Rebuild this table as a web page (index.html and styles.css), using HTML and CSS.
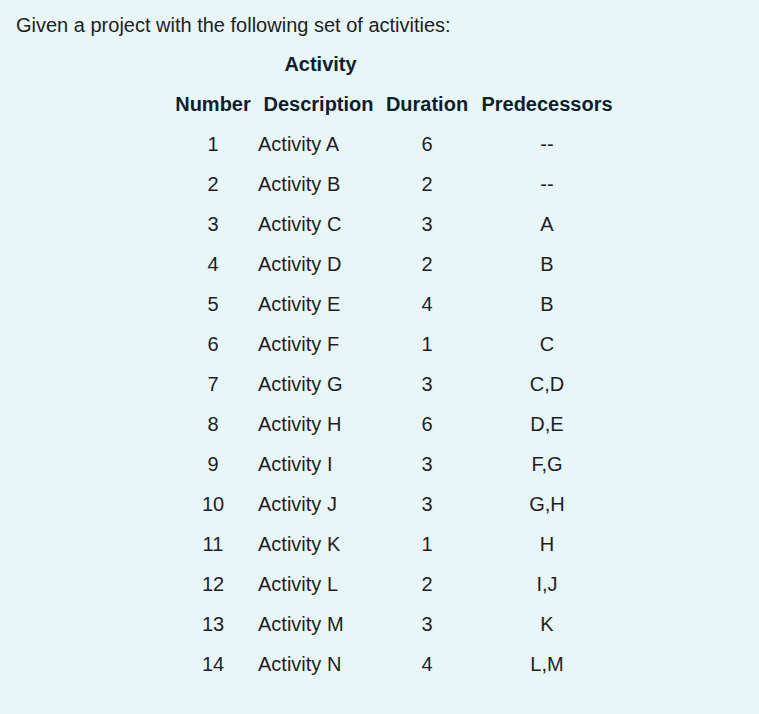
FILE: index.html
```html
<!DOCTYPE html>
<html>
<head>
<meta charset="utf-8">
<link rel="stylesheet" href="styles.css">
</head>
<body>
<p class="intro">Given a project with the following set of activities:</p>
<table class="acts">
  <colgroup>
    <col class="c-num"><col class="c-desc"><col class="c-dur"><col class="c-pred">
  </colgroup>
  <thead>
    <tr><th></th><th class="group">Activity</th><th></th><th></th></tr>
    <tr><th>Number</th><th>Description</th><th>Duration</th><th>Predecessors</th></tr>
  </thead>
  <tbody>
    <tr><td>1</td><td class="desc">Activity A</td><td>6</td><td>--</td></tr>
    <tr><td>2</td><td class="desc">Activity B</td><td>2</td><td>--</td></tr>
    <tr><td>3</td><td class="desc">Activity C</td><td>3</td><td>A</td></tr>
    <tr><td>4</td><td class="desc">Activity D</td><td>2</td><td>B</td></tr>
    <tr><td>5</td><td class="desc">Activity E</td><td>4</td><td>B</td></tr>
    <tr><td>6</td><td class="desc">Activity F</td><td>1</td><td>C</td></tr>
    <tr><td>7</td><td class="desc">Activity G</td><td>3</td><td>C,D</td></tr>
    <tr><td>8</td><td class="desc">Activity H</td><td>6</td><td>D,E</td></tr>
    <tr><td>9</td><td class="desc">Activity I</td><td>3</td><td>F,G</td></tr>
    <tr><td>10</td><td class="desc">Activity J</td><td>3</td><td>G,H</td></tr>
    <tr><td>11</td><td class="desc">Activity K</td><td>1</td><td>H</td></tr>
    <tr><td>12</td><td class="desc">Activity L</td><td>2</td><td>I,J</td></tr>
    <tr><td>13</td><td class="desc">Activity M</td><td>3</td><td>K</td></tr>
    <tr><td>14</td><td class="desc">Activity N</td><td>4</td><td>L,M</td></tr>
  </tbody>
</table>
</body>
</html>
```
FILE: styles.css
```css
html, body {
  margin: 0;
  padding: 0;
  background: #e8f6f8;
}
body {
  font-family: "Liberation Sans", Arial, sans-serif;
  font-size: 20px;
  color: #1e1e24;
  padding: 0 16px;
  min-height: 714px;
  box-sizing: border-box;
}
.intro {
  margin: 10px 0 0 0;
  line-height: 30px;
}
.acts {
  margin: 4px 0 0 154px;
  border-collapse: collapse;
  table-layout: fixed;
  width: 451px;
}
.c-num { width: 86px; }
.c-desc { width: 125px; }
.c-dur { width: 92px; }
.c-pred { width: 148px; }
.acts th, .acts td {
  padding: 0;
  height: 40px;
  text-align: center;
  vertical-align: middle;
  white-space: nowrap;
}
.acts th {
  font-weight: bold;
  color: #0f1e2a;
}
.acts th.group {
  padding-left: 4px;
}
.acts td.desc {
  text-align: left;
  padding-left: 2px;
}
```
